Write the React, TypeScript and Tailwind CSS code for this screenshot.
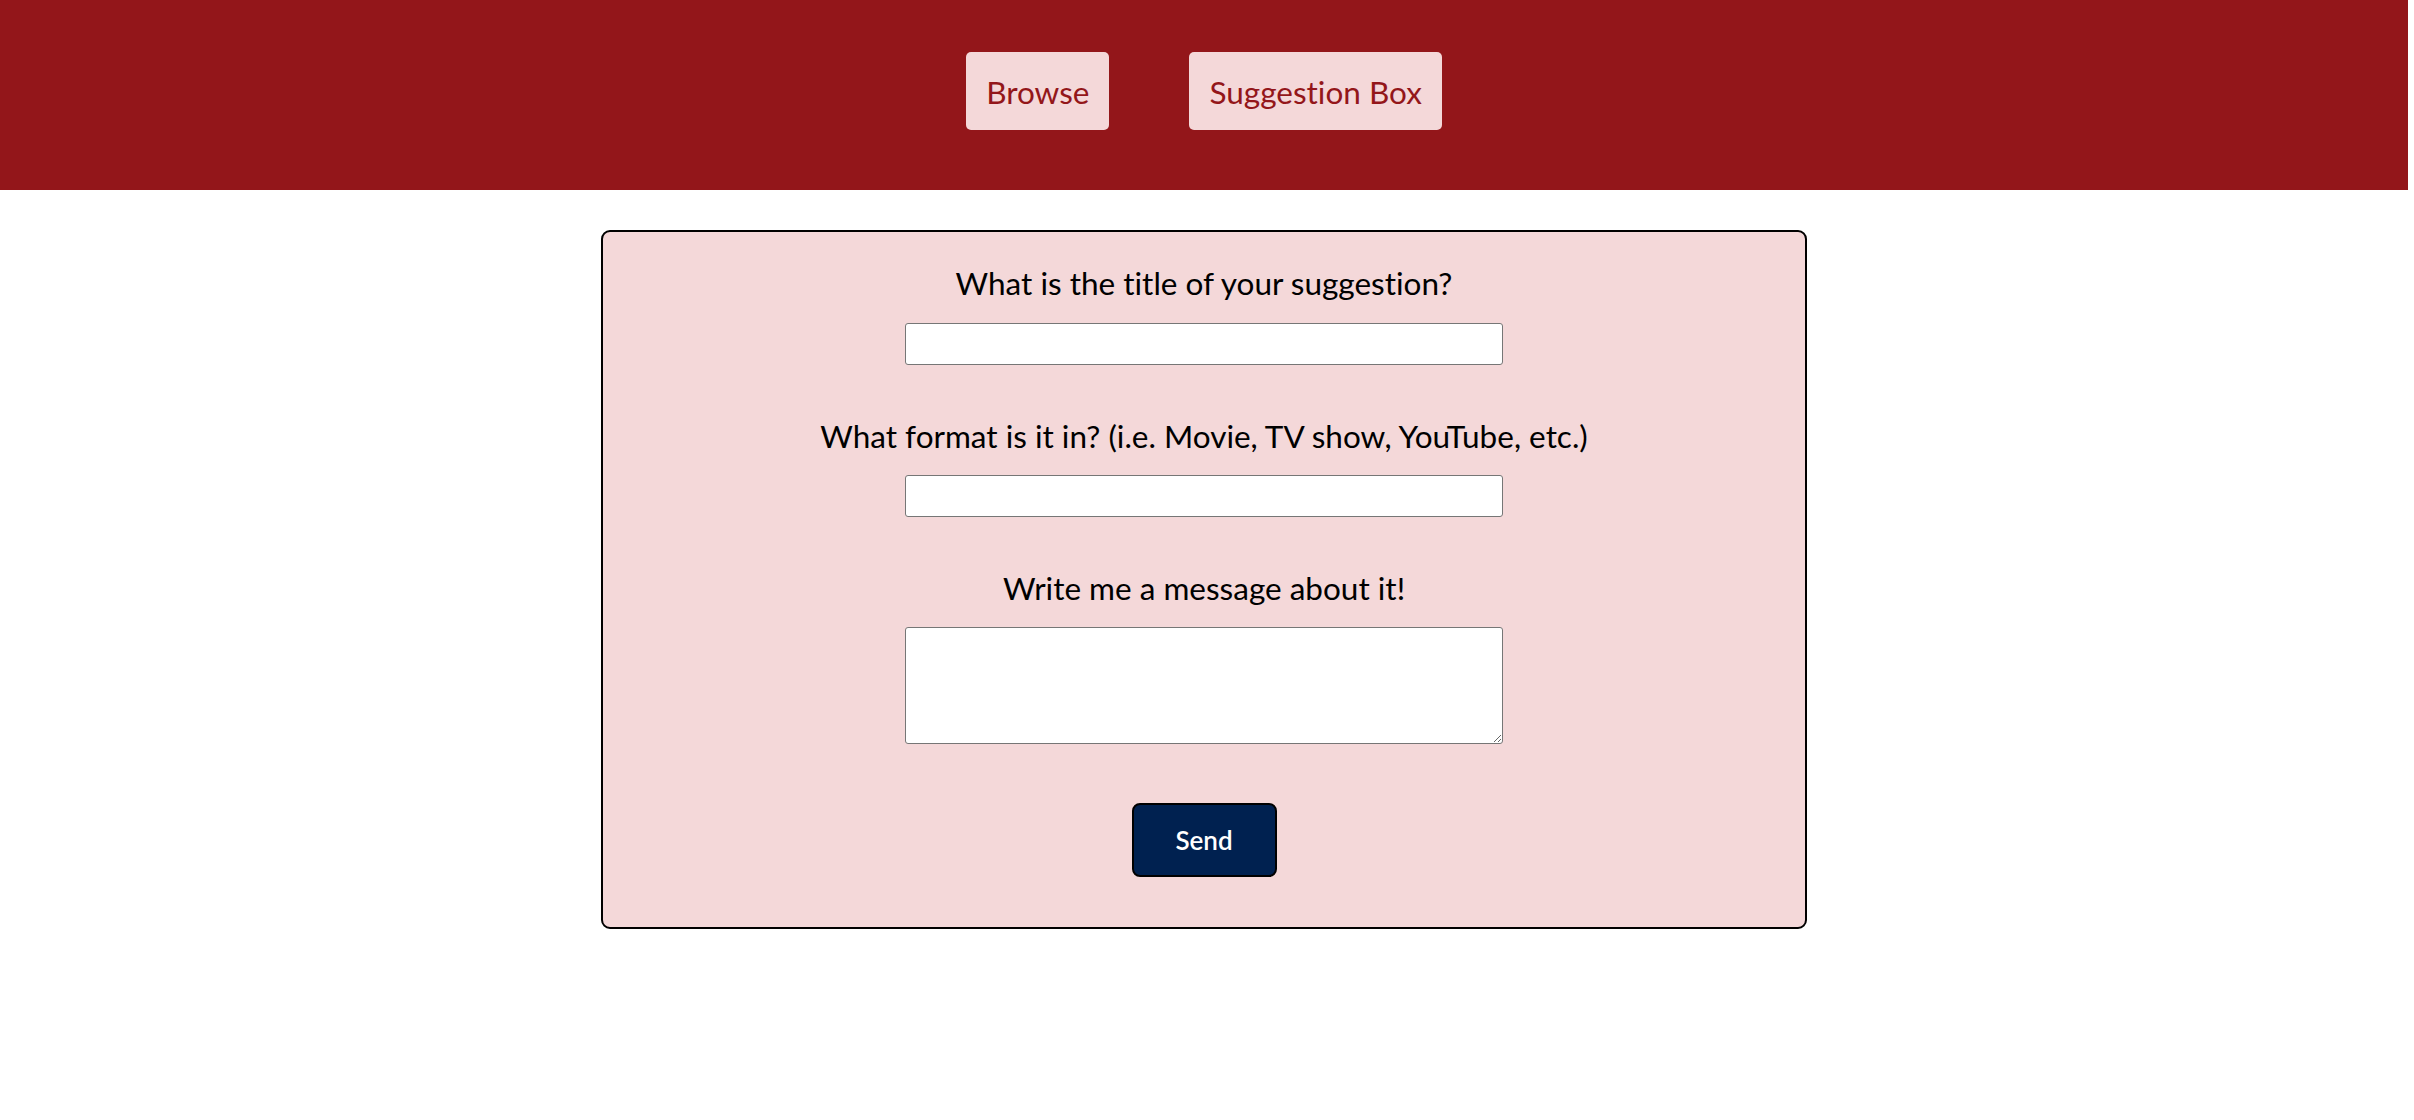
import { useState } from "react";

const lato = "font-['Lato','Liberation_Sans',sans-serif] [font-variant-ligatures:no-common-ligatures]";

function NavButton({ label }: { label: string }) {
  return (
    <button className="h-[78px] px-[20px] pt-[3px] rounded-[5px] bg-[#f4d8d9] text-[#93161a] text-[31.5px] leading-none">
      {label}
    </button>
  );
}

export default function App() {
  const [title, setTitle] = useState("");
  const [format, setFormat] = useState("");
  const [message, setMessage] = useState("");

  return (
    <div className={`w-[2408px] min-h-[1120px] bg-white ${lato}`}>
      {/* Top nav */}
      <header className="h-[190px] bg-[#93161a] flex justify-center items-start pt-[52px] gap-[80px]">
        <NavButton label="Browse" />
        <NavButton label="Suggestion Box" />
      </header>

      {/* Suggestion form */}
      <form
        onSubmit={(e) => e.preventDefault()}
        className="mx-auto mt-[40px] w-[1206px] bg-[#f4d8d9] border-2 border-black rounded-[9px] flex flex-col items-center pt-[33px] pb-[50px] text-black"
      >
        <label htmlFor="title" className="text-[31.5px] leading-[36px]">
          What is the title of your suggestion?
        </label>
        <input
          id="title"
          value={title}
          onChange={(e) => setTitle(e.target.value)}
          className="mt-[22px] w-[598px] h-[42px] bg-white border border-[#767676] rounded-[3px] px-2 text-[20px]"
        />

        <label htmlFor="format" className="mt-[53px] text-[31.5px] leading-[36px]">
          What format is it in? (i.e. Movie, TV show, YouTube, etc.)
        </label>
        <input
          id="format"
          value={format}
          onChange={(e) => setFormat(e.target.value)}
          className="mt-[21px] w-[598px] h-[42px] bg-white border border-[#767676] rounded-[3px] px-2 text-[20px]"
        />

        <label htmlFor="message" className="mt-[53px] text-[31.5px] leading-[36px]">
          Write me a message about it!
        </label>
        <textarea
          id="message"
          value={message}
          onChange={(e) => setMessage(e.target.value)}
          className="mt-[21px] w-[598px] h-[117px] bg-white border border-[#767676] rounded-[3px] px-2 text-[20px] resize"
        />

        <button
          type="submit"
          className="mt-[59px] w-[145px] h-[74px] bg-[#002150] border-2 border-black rounded-[8px] text-white text-[26px] font-semibold"
        >
          Send
        </button>
      </form>
    </div>
  );
}
